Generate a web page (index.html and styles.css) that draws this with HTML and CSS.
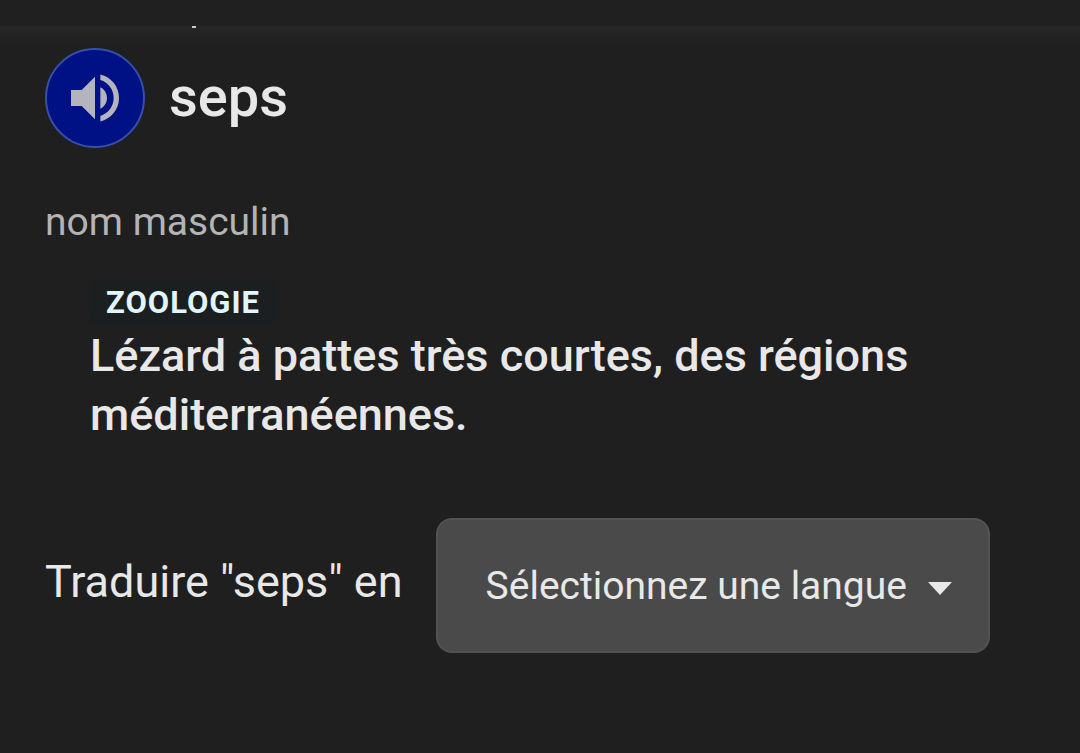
FILE: index.html
```html
<!DOCTYPE html>
<html lang="fr">
<head>
    <meta charset="UTF-8">
    <meta name="viewport" content="width=device-width, initial-scale=1.0">
    <title>seps - Dictionnaire</title>
    <link rel="stylesheet" href="styles.css">
</head>
<body>

    <header class="top-bar"></header>

    <main class="entry">
        <span class="scrolled-text"></span>

        <!-- Word -->
        <div class="word-row">
            <button type="button" class="listen" aria-label="Écouter">
                <svg viewBox="0 0 24 24" aria-hidden="true">
                    <path d="M3 9v6h4l5 5V4L7 9H3zm13.5 3c0-1.77-1.02-3.29-2.5-4.03v8.05c1.48-.73 2.5-2.25 2.5-4.02zM14 3.23v2.06c2.89.86 5 3.54 5 6.71s-2.11 5.85-5 6.71v2.06c4.01-.91 7-4.49 7-8.77s-2.99-7.86-7-8.77z"/>
                </svg>
            </button>
            <h1>seps</h1>
        </div>

        <p class="word-type">nom masculin</p>

        <!-- Definition -->
        <div class="definition">
            <span class="tag">ZOOLOGIE</span>
            <p>Lézard à pattes très courtes, des régions méditerranéennes.</p>
        </div>

        <!-- Translation -->
        <form class="translate">
            <label for="language">Traduire "seps" en</label>
            <div class="select-box">
                <select id="language">
                    <option value="" selected>Sélectionnez une langue</option>
                    <option value="en">Anglais</option>
                    <option value="es">Espagnol</option>
                    <option value="de">Allemand</option>
                    <option value="it">Italien</option>
                </select>
                <svg class="arrow" viewBox="0 0 24 13" aria-hidden="true">
                    <path d="M0 0h24L12 13z"/>
                </svg>
            </div>
        </form>
    </main>

</body>
</html>
```
FILE: styles.css
```css
/* General Reset */
* {
    margin: 0;
    padding: 0;
    box-sizing: border-box;
    font-family: Roboto, sans-serif;
}

body {
    background: #1f1f1f;
    color: #e8e8e8;
}

.top-bar {
    height: 26px;
    background: #202020;
}

.entry {
    padding: 0 45px 48px;
    background: linear-gradient(#262626, #1f1f1f 20px);
}

/* Bottom of the line hidden under the top bar */
.scrolled-text {
    display: block;
    width: 4px;
    height: 2px;
    margin-left: 147px;
    background: #c8c8c8;
}

/* Word */
.word-row {
    display: flex;
    align-items: center;
    gap: 24px;
    margin-top: 20px;
}

.listen {
    display: flex;
    align-items: center;
    justify-content: center;
    width: 100px;
    height: 100px;
    background: #001085;
    border: 2px solid #3450a8;
    border-radius: 50%;
    cursor: pointer;
}

.listen svg {
    width: 64px;
    height: 64px;
    fill: #b4b4bc;
}

h1 {
    padding-bottom: 2px;
    font-size: 56px;
    font-weight: 500;
    line-height: 64px;
}

.word-type {
    margin-top: 48px;
    color: #b4b4b4;
    font-size: 39px;
    line-height: 52px;
}

/* Definition */
.definition {
    margin-top: 33px;
    padding: 0 45px;
    font-size: 45px;
    font-weight: 500;
    line-height: 59px;
}

.tag {
    display: block;
    width: fit-content;
    margin-bottom: 2px;
    padding: 0 16px;
    background: #1b1f20;
    border-radius: 6px;
    color: #e1f5fe;
    font-size: 31px;
    font-weight: 700;
    line-height: 43px;
    letter-spacing: 1px;
}

/* Translation */
.translate {
    display: flex;
    align-items: center;
    gap: 33px;
    margin-top: 74px;
    padding-right: 45px;
}

.translate label {
    flex-shrink: 0;
    padding-bottom: 8px;
    font-size: 45px;
    line-height: 56px;
}

.select-box {
    position: relative;
    flex: 1;
}

.select-box select {
    width: 100%;
    height: 135px;
    padding: 0 48px;
    appearance: none;
    background: #4a4a4a;
    border: 2px solid #525252;
    border-radius: 16px;
    color: #e8e8e8;
    font-size: 39px;
    cursor: pointer;
}

.arrow {
    position: absolute;
    top: 64px;
    right: 38px;
    width: 24px;
    height: 13px;
    fill: #e8e8e8;
    pointer-events: none;
}
```
